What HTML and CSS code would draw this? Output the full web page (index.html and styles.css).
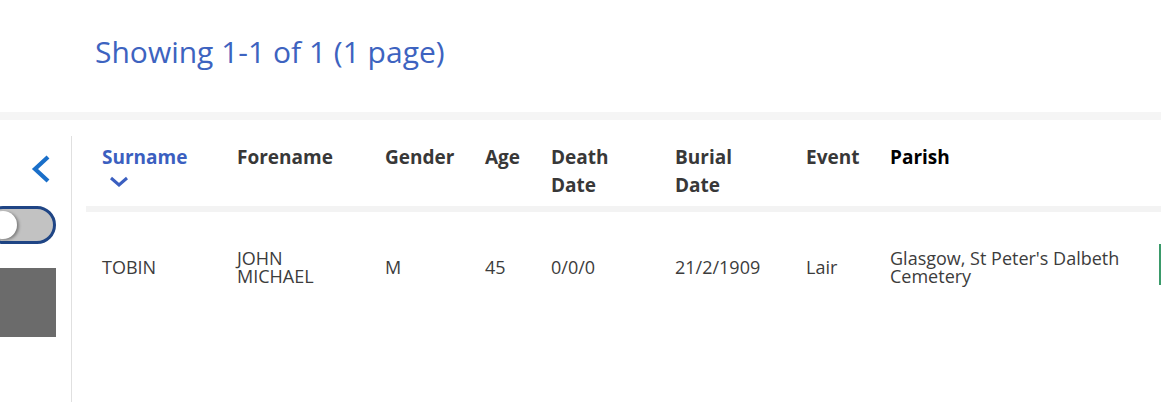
FILE: index.html
```html
<!DOCTYPE html>
<html lang="en">
<head>
<meta charset="utf-8">
<title>Results</title>
<link rel="stylesheet" href="styles.css">
</head>
<body>
<header class="summary">
  <h1 class="summary-title">Showing 1-1 of 1 (1 page)</h1>
</header>
<div class="band"></div>
<main class="main">
  <aside class="sidebar">
    <button class="collapse" aria-label="Collapse">
      <svg width="20" height="30" viewBox="0 0 20 30"><path d="M18 3 L5 15 L18 27" fill="none" stroke="#1a6fc9" stroke-width="4.2" stroke-linecap="butt" stroke-linejoin="miter"/></svg>
    </button>
    <div class="toggle"><span class="knob"></span></div>
    <div class="swatch"></div>
  </aside>
  <section class="results">
    <div class="grid head">
      <div class="cell th sorted">Surname
        <svg class="sort" width="20" height="11" viewBox="0 0 20 11"><path d="M2 2 L10 9 L18 2" fill="none" stroke="#3b5fc0" stroke-width="3"/></svg>
      </div>
      <div class="cell th">Forename</div>
      <div class="cell th">Gender</div>
      <div class="cell th">Age</div>
      <div class="cell th">Death Date</div>
      <div class="cell th">Burial Date</div>
      <div class="cell th">Event</div>
      <div class="cell th strong">Parish</div>
      <div class="cell th"></div>
    </div>
    <div class="grid row">
      <div class="cell td">TOBIN</div>
      <div class="cell td">JOHN MICHAEL</div>
      <div class="cell td">M</div>
      <div class="cell td">45</div>
      <div class="cell td">0/0/0</div>
      <div class="cell td">21/2/1909</div>
      <div class="cell td">Lair</div>
      <div class="cell td">Glasgow, St Peter's Dalbeth Cemetery</div>
      <div class="cell td action"><span class="action-btn"></span></div>
    </div>
  </section>
</main>
</body>
</html>
```

FILE: styles.css
```css
* { box-sizing: border-box; }
html, body { margin: 0; padding: 0; background: #fff; }
body {
  font-family: "Open Sans", "Liberation Sans", sans-serif;
  width: 1161px;
  height: 402px;
  overflow: hidden;
}
.summary {
  height: 112px;
  padding: 33px 0 0 95px;
}
.summary-title {
  margin: 0;
  font-size: 30px;
  line-height: 38px;
  font-weight: 400;
  color: #3d63c0;
}
.band {
  height: 8px;
  background: #f5f5f5;
}
.main {
  margin-top: 16px;
  display: flex;
  height: 266px;
}
.sidebar {
  width: 72px;
  flex: 0 0 72px;
  border-right: 1px solid #e0e0e0;
  overflow: hidden;
  padding-top: 18px;
}
.collapse {
  display: block;
  margin: 0 0 0 30px;
  padding: 0;
  border: 0;
  background: none;
  width: 20px;
  height: 30px;
}
.collapse svg { display: block; }
.toggle {
  margin: 22px 0 0 -16px;
  width: 72px;
  height: 38px;
  border: 3px solid #1f4585;
  border-radius: 19px;
  background: #c2c2c2;
  position: relative;
}
.knob {
  position: absolute;
  left: 2px;
  top: 2px;
  width: 28px;
  height: 28px;
  border-radius: 50%;
  background: #fff;
  box-shadow: 2px 1px 3px rgba(0,0,0,0.35);
}
.swatch {
  margin-top: 24px;
  width: 56px;
  height: 69px;
  background: #6b6b6b;
}
.results {
  flex: 1;
  padding-left: 14px;
  overflow: hidden;
}
.grid {
  display: grid;
  grid-template-columns: 135px 148px 100px 66px 124px 131px 84px 285px 120px;
  width: 1193px;
}
.head {
  padding: 7px 0 7px;
  border-bottom: 6px solid #f3f3f3;
}
.cell { padding: 0 16px; }
.th {
  font-size: 19px;
  line-height: 28px;
  font-weight: 700;
  color: #383838;
}
.th.sorted { color: #3b5fc0; }
.th.strong { color: #000; }
.sort {
  display: block;
  margin: 5px 0 0 7px;
}
.row {
  padding: 37px 0;
  align-items: center;
}
.td {
  font-size: 18px;
  line-height: 18px;
  color: #3c3c3c;
}
.action { padding: 0; }
.action-btn {
  display: block;
  width: 40px;
  height: 41px;
  border-left: 3px solid #3a9a6a;
  margin: -6px 0 -1px;
}
```
